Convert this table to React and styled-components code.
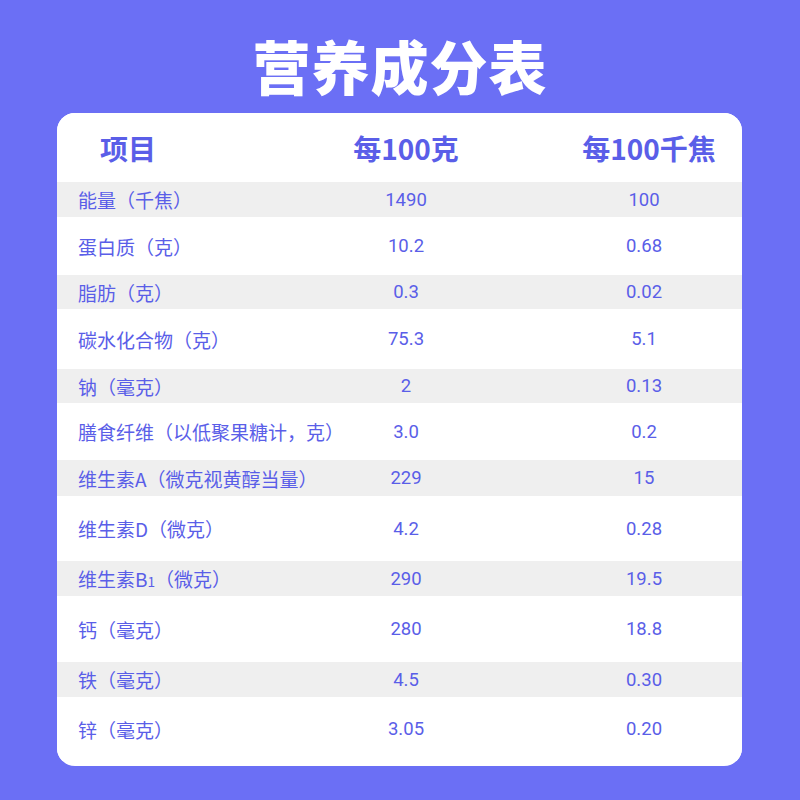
import React from "react";
import styled, { createGlobalStyle } from "styled-components";

const GlobalStyle = createGlobalStyle`
  html, body {
    margin: 0;
    padding: 0;
    background: #6b6ff5;
  }
  body {
    font-family: "Noto Sans CJK SC", "Noto Sans", sans-serif;
  }
`;

const ROWS = [
  { name: "能量（千焦）", g: "1490", kj: "100", h: 35 },
  { name: "蛋白质（克）", g: "10.2", kj: "0.68", h: 58 },
  { name: "脂肪（克）", g: "0.3", kj: "0.02", h: 34 },
  { name: "碳水化合物（克）", g: "75.3", kj: "5.1", h: 60 },
  { name: "钠（毫克）", g: "2", kj: "0.13", h: 34 },
  { name: "膳食纤维（以低聚果糖计，克）", g: "3.0", kj: "0.2", h: 57 },
  { name: "维生素A（微克视黄醇当量）", g: "229", kj: "15", h: 36 },
  { name: "维生素D（微克）", g: "4.2", kj: "0.28", h: 65 },
  { name: <>维生素B<Sub>1</Sub>（微克）</>, g: "290", kj: "19.5", h: 35 },
  { name: "钙（毫克）", g: "280", kj: "18.8", h: 66 },
  { name: "铁（毫克）", g: "4.5", kj: "0.30", h: 35 },
  { name: "锌（毫克）", g: "3.05", kj: "0.20", h: 64 },
];

function Sub({ children }) {
  return <SubNum>{children}</SubNum>;
}

const SubNum = styled.span`
  font-size: 0.72em;
  letter-spacing: 0;
`;

const Page = styled.div`
  width: 800px;
  height: 800px;
  background: #6b6ff5;
  display: flex;
  flex-direction: column;
  overflow: hidden;
`;

const TitleBar = styled.div`
  height: 113px;
  box-sizing: border-box;
  padding-top: 16px;
  display: flex;
  align-items: center;
  justify-content: center;
`;

const Title = styled.h1`
  margin: 0;
  color: #ffffff;
  font-size: 58px;
  font-weight: 900;
  letter-spacing: 1px;
  line-height: 1;
`;

const Card = styled.div`
  margin-left: 57px;
  width: 685px;
  background: #ffffff;
  border-radius: 18px;
  padding-bottom: 5px;
  overflow: hidden;
`;

const Row = styled.div`
  display: grid;
  grid-template-columns: 279px 140px 1fr;
  align-items: center;
  height: ${(p) => p.$h}px;
  background: ${(p) => (p.$shade ? "#efefef" : "#ffffff")};
  color: #5a5ee8;
`;

const HeadRow = styled(Row)`
  font-weight: 700;
`;

const NameCell = styled.div`
  padding-left: ${(p) => (p.$head ? 43 : 21)}px;
  white-space: nowrap;
  font-size: ${(p) => (p.$head ? 28 : 19)}px;
`;

const ValueCell = styled.div`
  text-align: center;
  white-space: nowrap;
  font-family: ${(p) => (p.$head ? `"Noto Sans CJK SC", sans-serif` : `Roboto, "Noto Sans CJK SC", sans-serif`)};
  font-size: ${(p) => (p.$head ? 28 : 18.5)}px;
`;

const LastCell = styled(ValueCell)`
  padding-left: ${(p) => (p.$head ? 88 : 78)}px;
  padding-right: 8px;
`;

export default function App() {
  return (
    <Page>
      <GlobalStyle />
      <TitleBar>
        <Title>营养成分表</Title>
      </TitleBar>
      <Card>
        <HeadRow $h={69}>
          <NameCell $head>项目</NameCell>
          <ValueCell $head>每100克</ValueCell>
          <LastCell $head>每100千焦</LastCell>
        </HeadRow>
        {ROWS.map((r, i) => (
          <Row key={i} $h={r.h} $shade={i % 2 === 0}>
            <NameCell>{r.name}</NameCell>
            <ValueCell>{r.g}</ValueCell>
            <LastCell>{r.kj}</LastCell>
          </Row>
        ))}
      </Card>
    </Page>
  );
}
